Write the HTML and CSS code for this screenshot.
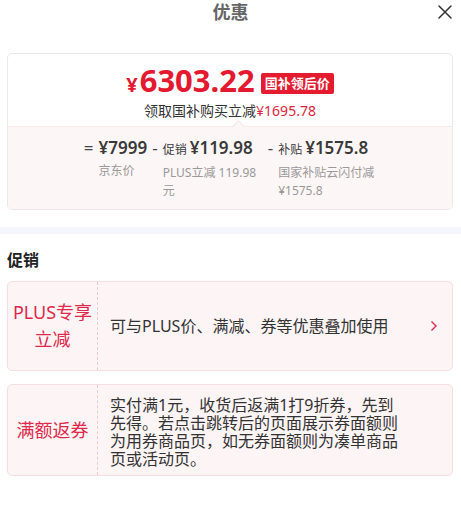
FILE: index.html
```html
<!DOCTYPE html>
<html lang="zh-CN">
<head>
<meta charset="utf-8">
<title>优惠</title>
<link rel="stylesheet" href="styles.css">
</head>
<body>
<div class="page">
  <header class="header">
    <span></span>
    <h1 class="title">优惠</h1>
    <button class="close" aria-label="关闭">
      <svg width="16" height="16" viewBox="0 0 16 16"><path d="M2 2 L14 14 M14 2 L2 14" stroke="#333" stroke-width="1.5" fill="none" stroke-linecap="round"/></svg>
    </button>
  </header>

  <section class="price-card">
    <div class="price-top">
      <div class="price-row">
        <span class="price"><span class="yen">¥</span>6303.22</span>
        <span class="tag">国补领后价</span>
      </div>
      <div class="price-sub">领取国补购买立减<span class="red">¥1695.78</span></div>
    </div>
    <div class="price-bottom">
      <div class="calc">
        <div class="calc-item">
          <span class="op">=</span>
          <div class="calc-col">
            <div class="val">¥7999</div>
            <div class="desc">京东价</div>
          </div>
        </div>
        <div class="calc-item">
          <span class="op">-</span>
          <div class="calc-col wide">
            <div class="val"><span class="lbl">促销</span>¥119.98</div>
            <div class="desc">PLUS立减 119.98 元</div>
          </div>
        </div>
        <div class="calc-item">
          <span class="op">-</span>
          <div class="calc-col wide">
            <div class="val"><span class="lbl">补贴</span>¥1575.8</div>
            <div class="desc">国家补贴云闪付减¥1575.8</div>
          </div>
        </div>
      </div>
    </div>
  </section>

  <div class="band"></div>

  <h2 class="section-title">促销</h2>

  <div class="promo promo-one">
    <div class="promo-left">PLUS专享<br>立减</div>
    <div class="promo-right">
      <span class="promo-text">可与PLUS价、满减、券等优惠叠加使用</span>
      <svg class="chev" width="8" height="12" viewBox="0 0 8 12"><path d="M1.5 1.5 L6 6 L1.5 10.5" stroke="#e0284a" stroke-width="1.4" fill="none"/></svg>
    </div>
  </div>

  <div class="promo promo-two">
    <div class="promo-left">满额返券</div>
    <div class="promo-right">
      <span class="promo-text multi">实付满1元，收货后返满1打9折券，先到先得。若点击跳转后的页面展示券面额则为用券商品页，如无券面额则为凑单商品页或活动页。</span>
    </div>
  </div>
</div>
</body>
</html>
```

FILE: styles.css
```css
* { box-sizing: border-box; }
html, body { margin: 0; padding: 0; background: #fff; }
body {
  font-family: "Noto Sans", "Noto Sans CJK SC", sans-serif;
  color: #333;
}
.page { width: 461px; }

.header {
  display: grid;
  grid-template-columns: 1fr auto 1fr;
  align-items: start;
  height: 24px;
}
.title {
  margin: 0;
  font-size: 18px;
  line-height: 24px;
  font-weight: 700;
  color: #666;
}
.close {
  justify-self: end;
  margin: 4px 8px 0 0;
  padding: 0;
  border: 0;
  background: none;
  width: 16px;
  height: 16px;
  display: block;
}
.close svg { display: block; }

.price-card {
  margin: 29px 8px 0 7px;
  border: 1px solid #f1e5e7;
  border-radius: 5px;
  overflow: hidden;
}
.price-top {
  padding: 11px 0 4px;
  display: flex;
  flex-direction: column;
  align-items: center;
  height: 72px;
}
.price-row {
  display: flex;
  align-items: center;
  gap: 6px;
  height: 34px;
}
.price {
  color: #e4182f;
  font-size: 31px;
  font-weight: 700;
  line-height: 34px;
  letter-spacing: 0;
}
.yen { font-size: 20px; margin-right: 2px; }
.tag {
  background: #e51b2f;
  color: #fff;
  font-size: 13px;
  font-weight: 700;
  line-height: 21px;
  height: 21px;
  padding: 0 4px;
  border-radius: 2px;
  margin-top: 3px;
}
.price-sub {
  margin-top: 2px;
  font-size: 14px;
  line-height: 20px;
  color: #333;
}
.red { color: #e0243a; }

.price-bottom {
  position: relative;
  background: #fdf6f6;
  border-top: 1px solid #f5e9ea;
  padding: 9px 0 9px;
}
.price-bottom::before {
  content: "";
  position: absolute;
  top: -5px;
  left: 226px;
  width: 8px;
  height: 8px;
  background: #fdf6f6;
  border-top: 1px solid #f1e2e4;
  border-left: 1px solid #f1e2e4;
  transform: rotate(45deg);
}
.calc {
  display: flex;
  justify-content: center;
  gap: 5px;
  padding-left: 2px;
}
.calc-item {
  display: flex;
  gap: 5px;
}
.op {
  font-size: 17px;
  line-height: 24px;
  color: #444;
}
.calc-col.wide { width: 100px; }
.val {
  font-size: 17px;
  line-height: 24px;
  font-weight: 600;
  color: #3a3a3a;
  white-space: nowrap;
}
.lbl {
  font-size: 12px;
  font-weight: 400;
  margin-right: 3px;
}
.desc {
  font-size: 12px;
  line-height: 18px;
  color: #999;
  margin-top: 2px;
}

.band {
  margin-top: 17px;
  height: 7px;
  background: #f5f6fb;
}

.section-title {
  margin: 15px 0 0 7px;
  font-size: 16px;
  line-height: 22px;
  font-weight: 700;
  color: #222;
}

.promo {
  display: flex;
  margin: 0 8px 0 7px;
  background: #fdf4f5;
  border: 1px solid #f5dfe3;
  border-radius: 5px;
}
.promo-one { margin-top: 10px; height: 90px; }
.promo-two { margin-top: 13px; }
.promo-left {
  width: 90px;
  flex: none;
  border-right: 1px dashed #ebc9ce;
  display: flex;
  align-items: center;
  justify-content: center;
  text-align: center;
  color: #e0284a;
  font-size: 18px;
  line-height: 27px;
}
.promo-right {
  flex: 1;
  display: flex;
  align-items: center;
  justify-content: space-between;
  padding: 0 14px 0 12px;
}
.promo-text {
  font-size: 16px;
  line-height: 20px;
  color: #333;
}
.promo-text.multi {
  width: 292px;
  line-height: 18px;
  padding: 11px 0 7px;
}
.chev { display: block; }
```
